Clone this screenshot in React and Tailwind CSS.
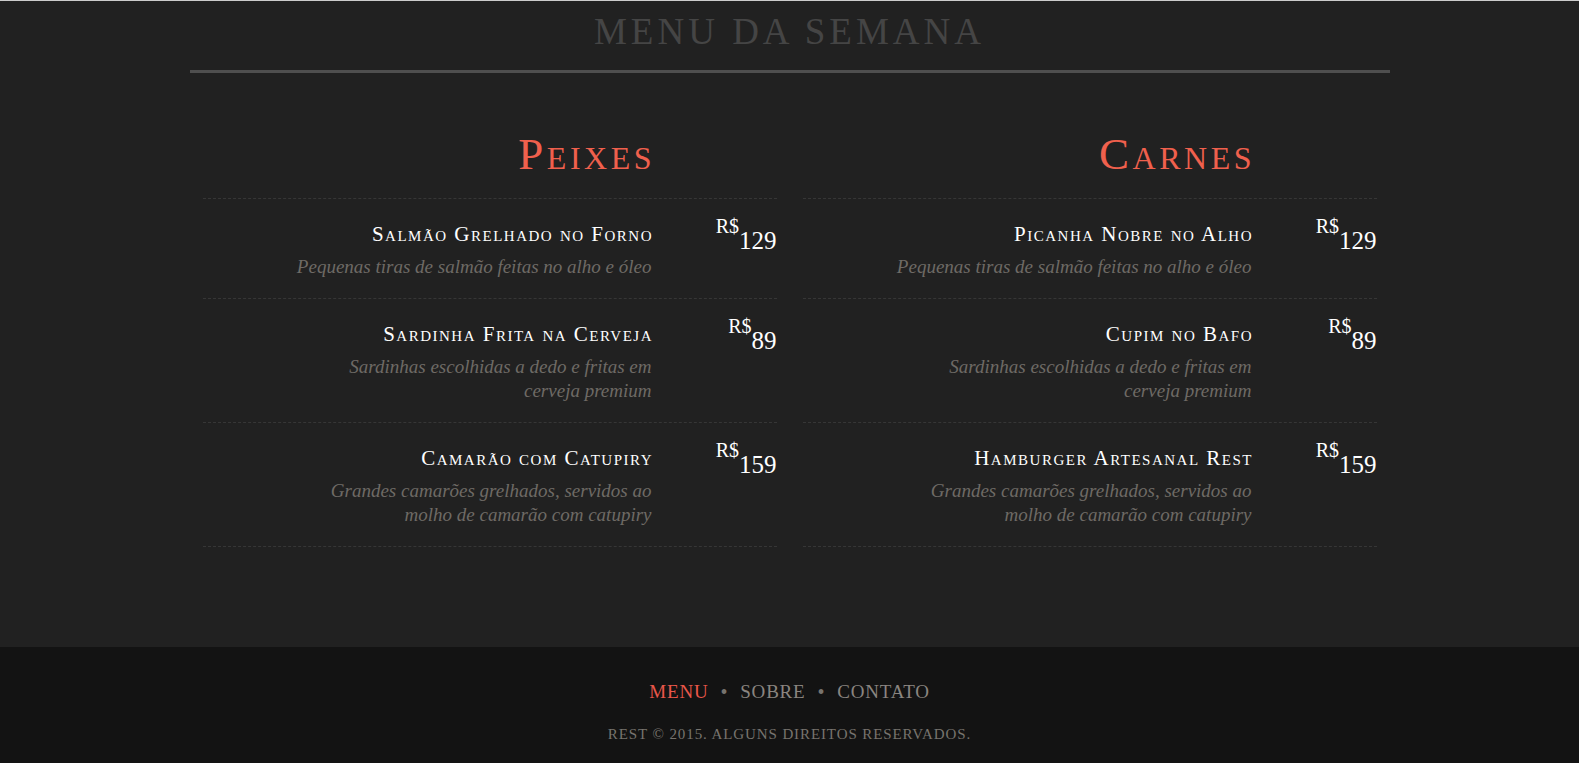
import React from 'react';

const serif = "[font-family:'Liberation_Serif',serif]";

const sections = [
    {
        title: 'Peixes',
        items: [
            { name: 'Salmão Grelhado no Forno', desc: ['Pequenas tiras de salmão feitas no alho e óleo'], price: 129 },
            { name: 'Sardinha Frita na Cerveja', desc: ['Sardinhas escolhidas a dedo e fritas em', 'cerveja premium'], price: 89 },
            { name: 'Camarão com Catupiry', desc: ['Grandes camarões grelhados, servidos ao', 'molho de camarão com catupiry'], price: 159 },
        ],
    },
    {
        title: 'Carnes',
        items: [
            { name: 'Picanha Nobre no Alho', desc: ['Pequenas tiras de salmão feitas no alho e óleo'], price: 129 },
            { name: 'Cupim no Bafo', desc: ['Sardinhas escolhidas a dedo e fritas em', 'cerveja premium'], price: 89 },
            { name: 'Hamburger Artesanal Rest', desc: ['Grandes camarões grelhados, servidos ao', 'molho de camarão com catupiry'], price: 159 },
        ],
    },
];

const MenuItem = ({ item }) => (
    <div className="flex border-b border-dashed border-[#363636] pt-[21px] pb-[19px]">
        <div className="flex-1 text-right">
            <h3 className="text-[21px] leading-[28px] text-white tracking-[1.5px] mr-[-1.5px] [font-variant-caps:small-caps]">
                {item.name}
            </h3>
            <p className="mt-[7px] text-[19px] leading-[24px] italic text-[#6e6a65]">
                {item.desc.map((line, i) => (
                    <span key={i} className="block">{line}</span>
                ))}
            </p>
        </div>
        <div className="w-[125px] flex justify-end items-start text-white">
            <span className="text-[20px] leading-[20px] mt-[-4px]">R$</span>
            <span className="text-[25px] leading-[25px] mt-[8px]">{item.price}</span>
        </div>
    </div>
);

export default function App() {
    return (
        <div className={`${serif} min-h-screen flex flex-col bg-[#212121] border-t border-[#cccccc]`}>
            <main className="flex-1">
                <div className="w-[1200px] mx-auto">
                    <h1 className="pt-[11px] text-center text-[37px] leading-[40px] tracking-[4px] text-[#454545]">
                        MENU DA SEMANA
                    </h1>
                    <div className="mt-[18px] h-[3px] bg-[#4f4f4f]" />
                    <div className="grid grid-cols-2">
                        {sections.map((section) => (
                            <section key={section.title} className="px-[13px]">
                                <div className="pt-[55px] pb-[18px] pr-[125px] text-right border-b border-dashed border-[#363636]">
                                    <h2 className="text-[45px] leading-[52px] text-[#f0604d] tracking-[3.5px] mr-[-3.5px] [font-variant-caps:small-caps]">
                                        {section.title}
                                    </h2>
                                </div>
                                {section.items.map((item) => (
                                    <MenuItem key={item.name} item={item} />
                                ))}
                            </section>
                        ))}
                    </div>
                </div>
            </main>
            <footer className="h-[116px] bg-[#131313] pt-[33px] text-center">
                <nav className="flex justify-center items-center gap-[12px] text-[19px] leading-[24px] tracking-[0.8px]">
                    <span className="text-[#e9574a]">MENU</span>
                    <span className="text-[#77736e] text-[20px]">•</span>
                    <span className="text-[#8a8580]">SOBRE</span>
                    <span className="text-[#77736e] text-[20px]">•</span>
                    <span className="text-[#8a8580]">CONTATO</span>
                </nav>
                <p className="mt-[20px] text-[15px] leading-[20px] tracking-[0.9px] text-[#77736e]">
                    REST © 2015. ALGUNS DIREITOS RESERVADOS.
                </p>
            </footer>
        </div>
    );
}
